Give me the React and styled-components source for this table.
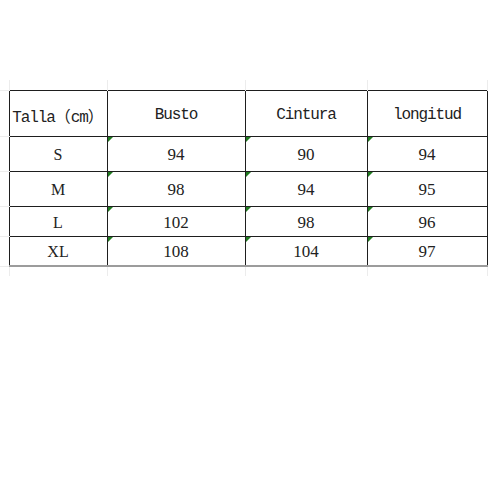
import React from 'react';
import styled, { createGlobalStyle } from 'styled-components';

const GlobalStyle = createGlobalStyle`
    html, body {
        margin: 0;
        padding: 0;
        background: #ffffff;
    }
`;

const Page = styled.div`
    width: 496px;
    height: 496px;
    background: #fff;
    padding-top: 80px;
    box-sizing: border-box;
`;

const Sheet = styled.table`
    border-collapse: collapse;
    table-layout: fixed;
    width: 487px;
`;

const Row = styled.tr`
    height: ${props => props.h}px;
`;

// faint spreadsheet gridlines that run out past the table edge
const Ghost = styled.td`
    padding: 0;
    border: none;
    ${props => props.side === 'left' && `
        border-top: 1px solid #ececec;
        border-bottom: 1px solid #ececec;
    `}
    ${props => props.side === 'edge' && `
        border-left: 1px solid #ececec;
        border-right: 1px solid #ececec;
    `}
`;

const fonts = {
    mono: `"Liberation Mono", "Noto Sans CJK SC", monospace`,
    serif: `"Liberation Serif", serif`
};

const Cell = styled.td`
    position: relative;
    padding: ${props => (props.kind === 'head' ? '4px' : '3px')} 0 0 0;
    border: 1px solid #1e1e1e;
    ${props => props.last && `border-bottom: 2px solid #9c9c9c;`}
    text-align: center;
    vertical-align: middle;
    color: #222;
    font-family: ${props => (props.kind === 'head' ? fonts.mono : fonts.serif)};
    font-size: ${props =>
        props.kind === 'head' ? '16px' : props.kind === 'size' ? '16px' : '17px'};
    letter-spacing: ${props => (props.kind === 'head' ? '-1.1px' : '0')};
    white-space: nowrap;

    ${props => props.flag && `
        &::before {
            content: '';
            position: absolute;
            top: 0;
            left: 0;
            border-top: 5px solid #1f7a1f;
            border-right: 5px solid transparent;
        }
    `}
`;

const Paren = styled.span`
    font-family: "Noto Sans CJK SC", sans-serif;
    letter-spacing: 0;
`;

const headers = ['Busto', 'Cintura', 'longitud'];

const rows = [
    { size: 'S', values: ['94', '90', '94'], h: 35 },
    { size: 'M', values: ['98', '94', '95'], h: 35 },
    { size: 'L', values: ['102', '98', '96'], h: 30 },
    { size: 'XL', values: ['108', '104', '97'], h: 30 }
];

const App = () => (
    <Page>
        <GlobalStyle />
        <Sheet>
            <colgroup>
                <col style={{ width: 9 }} />
                <col style={{ width: 98 }} />
                <col style={{ width: 138 }} />
                <col style={{ width: 122 }} />
                <col style={{ width: 120 }} />
            </colgroup>
            <tbody>
                <Row h={10}>
                    <Ghost />
                    <Ghost side="edge" />
                    <Ghost side="edge" />
                    <Ghost side="edge" />
                    <Ghost side="edge" />
                </Row>
                <Row h={46}>
                    <Ghost side="left" />
                    <Cell kind="head">
                        Talla<Paren>（</Paren>cm<Paren>）</Paren>
                    </Cell>
                    {headers.map(h => (
                        <Cell kind="head" key={h}>
                            {h}
                        </Cell>
                    ))}
                </Row>
                {rows.map((r, i) => (
                    <Row h={r.h} key={r.size}>
                        <Ghost side="left" />
                        <Cell kind="size" last={i === rows.length - 1}>
                            {r.size}
                        </Cell>
                        {r.values.map((v, j) => (
                            <Cell flag last={i === rows.length - 1} key={j}>
                                {v}
                            </Cell>
                        ))}
                    </Row>
                ))}
                <Row h={10}>
                    <Ghost />
                    <Ghost side="edge" />
                    <Ghost side="edge" />
                    <Ghost side="edge" />
                    <Ghost side="edge" />
                </Row>
            </tbody>
        </Sheet>
    </Page>
);

export default App;
